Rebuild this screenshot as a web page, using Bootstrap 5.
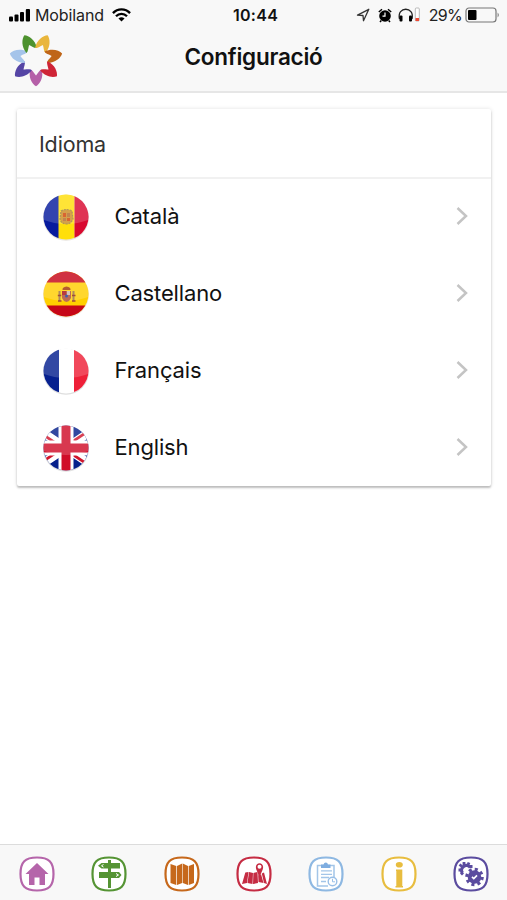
<!DOCTYPE html>
<html lang="ca">
<head>
<meta charset="utf-8">
<meta name="viewport" content="width=device-width, initial-scale=1">
<title>Configuració</title>
<link rel="stylesheet" href="https://cdn.jsdelivr.net/npm/bootstrap@5.3.0/dist/css/bootstrap.min.css">
<style>
body{font-family:Inter,"Liberation Sans",sans-serif;color:#111;background:#fff}
svg{display:block;flex:none}
.screen{height:900px;overflow:hidden}
.top-bar{height:93px;background:#f8f8f8;border-bottom:2px solid #e6e6e6}
.status{height:30px;font-size:16px;line-height:30px;color:#222}
.status>div{flex:1 1 0}
.clock{font-weight:600;letter-spacing:.3px;color:#111;padding-left:3px}
.carrier{letter-spacing:-.1px}
.percent{letter-spacing:-.7px;margin-left:7px;margin-right:-1px}
.indicators{padding-right:7px}
.title-row{height:61px}
.title-row h1{font-size:22.5px;font-weight:600;line-height:54px;letter-spacing:-.25px}
.side{width:72px}
.panel{margin:16px 16px 0 17px;border:0;border-radius:2px;height:377px;box-shadow:0 2px 2px rgba(0,0,0,.22),0 0 4px rgba(0,0,0,.12)}
.panel-head{height:70px;border-bottom:2px solid #f1f1f1;padding-left:22px;font-size:21.5px;line-height:71px;letter-spacing:-.15px;color:#333}
.lang{height:77px;padding:0 21px 3px 24px;font-size:22px;letter-spacing:-.15px;border:0;color:#111;background:transparent}
.lang span{margin-left:23.5px;line-height:30px}
.flag{margin-top:2px}
.tabs{height:56px;background:#f8f8f8;border-top:1px solid #dcdcdc;padding:3px 0 0 1px}
</style>
<script src="https://cdn.jsdelivr.net/npm/bootstrap@5.3.0/dist/js/bootstrap.bundle.min.js"></script>
</head>
<body>
<div class="screen d-flex flex-column">
<header class="top-bar">
  <div class="status d-flex">
    <div class="d-flex align-items-center ps-2">
      <svg width="23" height="14" viewBox="0 0 23 14" fill="#000"><rect x="1" y="8.500" width="4" height="5" rx="1"/><rect x="6.500" y="6.500" width="4" height="7" rx="1"/><rect x="12" y="4" width="4" height="9.500" rx="1"/><rect x="17.800" y="1" width="4.200" height="12.500" rx="1"/></svg>
      <span class="carrier ms-1">Mobiland</span>
      <svg class="ms-2" width="19" height="14" viewBox="0 0 20 14" fill="none" stroke="#000" stroke-width="2.500"><path d="M1 5C6-.2 14-.2 19 5M4.200 8.300C7.500 5 12.500 5 15.800 8.300"/><path d="M6.800 10.600Q10 8 13.200 10.600L10 13.800Z" fill="#000" stroke="none"/></svg>
    </div>
    <span class="clock">10:44</span>
    <div class="indicators d-flex align-items-center justify-content-end">
      <svg width="14" height="14" viewBox="0 0 14 14" fill="none" stroke="#333" stroke-width="1.300" stroke-linejoin="round"><path d="M1.500 7.200 12.800 1.300 7.500 12.700 7 7.500Z"/></svg>
      <svg class="ms-2" width="14" height="15" viewBox="0 0 14 15"><circle cx="7" cy="8" r="5.800"/><path d="M.8 4 4 1.300M13.200 4 10 1.300M3.300 12.500 2 14M10.700 12.500 12 14" stroke="#000" stroke-width="1.500"/><path d="M7 4.500V8.200H4.500" stroke="#fff" stroke-width="1.200" fill="none"/></svg>
      <svg class="ms-1" width="26" height="16" viewBox="-1 0 26 16"><path d="M2.500 12C-.5 -1 18-1 15 12" fill="none" stroke="#222" stroke-width="1.300"/><rect x="2.500" y="8.500" width="3" height="6" rx="1"/><rect x="12" y="8.500" width="3" height="6" rx="1"/><rect x="18.300" y="1" width="4" height="13" rx="1" fill="#fff" stroke="#aaa" stroke-width=".8"/><path d="M18.500 11H22V14H18.500Z" fill="#f04a35"/></svg>
      <span class="percent">29%</span>
      <svg class="ms-1" width="35" height="16" viewBox="0 0 35 16"><rect x="1" y="1" width="30" height="14" rx="3" fill="none" stroke="#777" stroke-width="1.200"/><rect x="3" y="3" width="8.500" height="10" rx="1"/><path d="M32.600 5.500Q35 8 32.600 10.500Z" fill="#777"/></svg>
    </div>
  </div>
  <div class="title-row d-flex justify-content-between">
    <div class="side ps-2">
      <svg width="56" height="58" viewBox="-28 -29.500 56 58">
        <defs><path id="petal" d="M0 26.800C-4 24.500-7.800 18-5.800 10-3.300 10.600-2.300 13.500 0 16 2.300 13.500 3.300 10.600 5.800 10 7.800 18 4 24.500 0 26.800Z"/></defs>
        <use href="#petal" fill="#b560a8"/><use href="#petal" fill="#5545a5" transform="rotate(51.430)"/><use href="#petal" fill="#a5c4ea" transform="rotate(102.860)"/><use href="#petal" fill="#4d922e" transform="rotate(154.290)"/><use href="#petal" fill="#e9b63c" transform="rotate(205.710)"/><use href="#petal" fill="#bf6518" transform="rotate(257.140)"/><use href="#petal" fill="#cf2436" transform="rotate(308.570)"/>
      </svg>
    </div>
    <h1 class="m-0">Configuració</h1>
    <div class="side"></div>
  </div>
</header>
<main class="flex-grow-1">
  <section class="panel card">
    <div class="panel-head">Idioma</div>
    <div class="list-group list-group-flush">
      <a href="#" class="lang list-group-item d-flex align-items-center">
        <svg class="flag" width="50" height="50" viewBox="0 0 50 50"><defs><clipPath id="disc"><circle cx="25" cy="25" r="22.500"/></clipPath><path id="shine" d="M0 0H50V27Q25 37 0 27Z" fill="#fff" opacity=".18"/></defs><circle cx="25" cy="25.800" r="23" fill="#e7e4df"/><g clip-path="url(#disc)"><path fill="#071b9e" d="M0 0H18V50H0Z"/><path fill="#ffdf0a" d="M17.500 0H33.500V50H17.500Z"/><path fill="#d8082f" d="M33.500 0H50V50H33.500Z"/><use href="#shine"/></g><path d="M20 19Q25 16 31 19L32 27Q30 32 25.500 32 20 32 19 27Z" fill="#d5a04b" stroke="#ae965a" stroke-width="1.200" stroke-dasharray="2 1"/><path d="M22 21H25V25H22ZM26 26H29V29H26Z" fill="#d96531"/><path d="M26 21H29V25H26ZM22 26H25V29H22Z" fill="#c18450"/></svg>
        <span>Català</span>
        <svg class="ms-auto" width="16" height="22" viewBox="0 0 16 22"><path d="M3.500 3 12 11 3.500 19" fill="none" stroke="#c4c4c4" stroke-width="2.500"/></svg>
      </a>
      <a href="#" class="lang list-group-item d-flex align-items-center">
        <svg class="flag" width="50" height="50" viewBox="0 0 50 50"><circle cx="25" cy="25.800" r="23" fill="#eee5e2"/><g clip-path="url(#disc)"><path fill="#ffcf00" d="M0 0H50V50H0Z"/><path fill="#c60618" d="M0 0H50V13.500H0ZM0 36.500H50V50H0Z"/><use href="#shine"/></g><path d="M21 22H30V29Q29 32 25.500 33 22 32 21 29Z" fill="#bd6a55"/><path d="M21 22H25V26H21Z" fill="#b83a3f"/><path d="M26 22H29V26H26Z" fill="#d4c3bc"/><circle cx="25.500" cy="27" r="1.500" fill="#415cae"/><path d="M21.500 21Q21 18 25.500 17.500 30 18 29.500 21Z" fill="#b45b30"/><path d="M18.500 22V32M32.500 22V32" stroke="#ad8a5d" stroke-width="2"/><path d="M16.800 26.500H20.300M31 26.500H34.500M17 32H20.500M31 32H34.500" stroke="#a34b3a" stroke-width="1.500"/></svg>
        <span>Castellano</span>
        <svg class="ms-auto" width="16" height="22" viewBox="0 0 16 22"><path d="M3.500 3 12 11 3.500 19" fill="none" stroke="#c4c4c4" stroke-width="2.500"/></svg>
      </a>
      <a href="#" class="lang list-group-item d-flex align-items-center">
        <svg class="flag" width="50" height="50" viewBox="0 0 50 50"><circle cx="25" cy="25.800" r="23" fill="#dedede"/><g clip-path="url(#disc)"><path fill="#fff" d="M0 0H50V50H0Z"/><path fill="#06208f" d="M0 0H18V50H0Z"/><path fill="#ee2038" d="M33 0H50V50H33Z"/><use href="#shine"/></g></svg>
        <span>Français</span>
        <svg class="ms-auto" width="16" height="22" viewBox="0 0 16 22"><path d="M3.500 3 12 11 3.500 19" fill="none" stroke="#c4c4c4" stroke-width="2.500"/></svg>
      </a>
      <a href="#" class="lang list-group-item d-flex align-items-center">
        <svg class="flag" width="50" height="50" viewBox="0 0 50 50"><circle cx="25" cy="25.800" r="23" fill="#e0e0e0"/><g clip-path="url(#disc)"><path fill="#06208b" d="M0 0H50V50H0Z"/><path d="M-5 5 55 45M55 5-5 45" stroke="#fff" stroke-width="8.500"/><path d="M-5 7 25 27M25 23 55 3M25 27 55 47M-5 43 25 23" stroke="#d0152c" stroke-width="2.800"/><path d="M25 0V50M0 25H50" stroke="#fff" stroke-width="15"/><path d="M25 0V50M0 25H50" stroke="#d00d29" stroke-width="9"/><use href="#shine"/></g></svg>
        <span>English</span>
        <svg class="ms-auto" width="16" height="22" viewBox="0 0 16 22"><path d="M3.500 3 12 11 3.500 19" fill="none" stroke="#c4c4c4" stroke-width="2.500"/></svg>
      </a>
    </div>
  </section>
</main>
<nav class="tabs row g-0 flex-nowrap">
  <a class="col d-flex justify-content-center align-items-center" href="#" aria-label="Inici"><svg width="36" height="36" viewBox="0 0 36 36"><defs><path id="frame" d="M18 1.500C30 1.500 34.500 6 34.500 18S30 34.500 18 34.500 1.500 30 1.500 18 6 1.500 18 1.500Z"/></defs><use href="#frame" fill="#fff" stroke="#b565aa" stroke-width="2.200"/><path fill="#b565aa" d="M18 7 29.500 18H26V29H20.500V21.500H15.500V29H10V18H6.500Z"/></svg></a>
  <a class="col d-flex justify-content-center align-items-center" href="#" aria-label="Rutes"><svg width="36" height="36" viewBox="0 0 36 36"><use href="#frame" fill="#fff" stroke="#559434" stroke-width="2.200"/><path fill="#559434" d="M17 4H20V7H29V12.500H20V16H28L30.500 19 28 22H20V32H17V22H8V16H17V12.500H10.500L7 9.700 10.500 7H17Z"/><path d="M12.500 8.500 10.500 9.800 12.500 11M25 17.500 27.500 19 25 20.500" fill="none" stroke="#fff"/></svg></a>
  <a class="col d-flex justify-content-center align-items-center" href="#" aria-label="Plànol"><svg width="36" height="36" viewBox="0 0 36 36"><use href="#frame" fill="#fff" stroke="#c6681b" stroke-width="2.200"/><path fill="#c6681b" d="M6.500 8 12.300 10V29L6.500 27ZM13 10 18.200 7.500V27L13 29ZM18.800 7.500 24 10V29L18.800 27ZM24.700 10 30 8V27L24.700 29Z"/></svg></a>
  <a class="col d-flex justify-content-center align-items-center" href="#" aria-label="Mapa"><svg width="36" height="36" viewBox="0 0 36 36"><use href="#frame" fill="#fff" stroke="#c52c43" stroke-width="2.200"/><path fill="#c52c43" d="M9.300 16.500 12.500 16 11 27 6 28ZM13 16 17 17 16.500 28 11.500 27ZM17.400 17 21.500 16 22 27 17 28ZM22 16 23 20 25 18 27.500 27 22.500 26ZM25.800 17.500 28 16.500 31 28 28 27Z"/><path fill="#c52c43" fill-rule="evenodd" d="M23.500 21 20.300 13.500C17.500 5 29.500 5 26.700 13.500ZM23.500 8.800A2 2 0 1 0 23.500 12.800 2 2 0 0 0 23.500 8.800"/></svg></a>
  <a class="col d-flex justify-content-center align-items-center" href="#" aria-label="Agenda"><svg width="36" height="36" viewBox="0 0 36 36"><use href="#frame" fill="#fff" stroke="#8eb8e2" stroke-width="2.200"/><path d="M20 30H9.500V9.500H26V21" fill="none" stroke="#a3c5e8" stroke-width="1.500"/><path fill="#7eade0" d="M13 12V8.500H15.500Q16 6.500 17.800 6.500T20 8.500H22.500V12Z"/><path d="M13 14.800H24M13 18.300H24M13 21.500H21M13 25.500H18" stroke="#a3c5e8" stroke-width="1.300"/><circle cx="24.500" cy="25.500" r="4.300" fill="#fff" stroke="#99bfe7" stroke-width="1.400"/><path d="M24.500 22.800V25.800H27" stroke="#99bfe7" fill="none"/></svg></a>
  <a class="col d-flex justify-content-center align-items-center" href="#" aria-label="Informació"><svg width="36" height="36" viewBox="0 0 36 36"><use href="#frame" fill="#fff" stroke="#e8bd3f" stroke-width="2.200"/><ellipse cx="18.300" cy="8.800" rx="3.500" ry="2.800" fill="#e8bd3f"/><path fill="#e8bd3f" d="M15 13.500H21.300V30H22V31.500H14.500V30H15.300V15H15Z"/></svg></a>
  <a class="col d-flex justify-content-center align-items-center" href="#" aria-label="Configuració"><svg width="36" height="36" viewBox="0 0 36 36"><use href="#frame" fill="#fff" stroke="#5b4c9f" stroke-width="2.200"/><g fill="none" stroke="#5b4c9f"><circle cx="21.500" cy="21" r="6.800" fill="#5b4c9f" stroke="none"/><circle cx="21.500" cy="21" r="7.700" stroke-width="3.200" stroke-dasharray="3 3.050"/><path d="M9.500 17A4.500 4.500 0 1 1 17.300 11.500" stroke-width="3.200"/><path d="M11 6V9M16 6.500 15 9M19.500 10.500H17M6.500 8.500 9 10.500M5.500 14H8M8 18.500 10 16.500" stroke-width="2.800"/><path d="M19 20.800 20.800 22.500 24 19.300" stroke="#fff" stroke-width="1.700"/></g></svg></a>
</nav>
</div>
</body>
</html>
